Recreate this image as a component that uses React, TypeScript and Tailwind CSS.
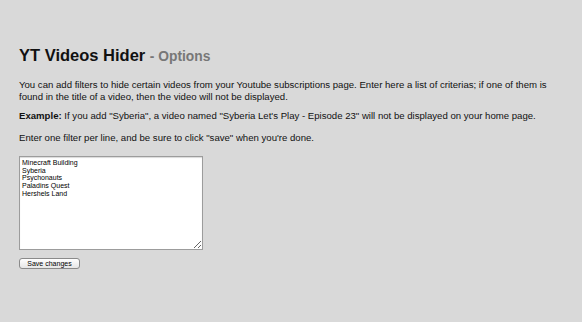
import { useState } from "react";

const DEFAULT_FILTERS = [
  "Minecraft Building",
  "Syberia",
  "Psychonauts",
  "Paladins Quest",
  "Hershels Land",
].join("\n");

export default function App() {
  const [filters, setFilters] = useState(DEFAULT_FILTERS);

  return (
    <main className="min-h-[322px] w-full bg-[#d9d9d9] pl-[19px] pr-[30px] pt-[45px] pb-4 font-['Liberation_Sans',Arial,sans-serif] text-[#111]">
      <h1 className="text-[16.5px] leading-[20px] font-bold">
        YT Videos Hider{" "}
        <span className="text-[13.8px] text-[#777]">- Options</span>
      </h1>
      <div className="mt-[12px] text-[9.6px] leading-[12px]">
        <p>
          You can add filters to hide certain videos from your Youtube
          subscriptions page. Enter here a list of criterias; if one of them is
          found in the title of a video, then the video will not be displayed.
        </p>
        <p className="mt-[7px]">
          <b>Example:</b> If you add "Syberia", a video named "Syberia Let's
          Play - Episode 23" will not be displayed on your home page.
        </p>
        <p className="mt-[10px]">
          Enter one filter per line, and be sure to click "save" when you're done.
        </p>
      </div>
      <div className="mt-[12px] flex flex-col items-start gap-[8px]">
        <textarea
          value={filters}
          onChange={(e) => setFilters(e.target.value)}
          className="block h-[94px] w-[184px] border border-[#9c9c9c] bg-white px-[2px] pt-[2px] text-[7px] leading-[7.7px] text-black shadow-[inset_0_1px_1px_rgba(0,0,0,0.15)] outline-none"
        />
        <button className="h-[11px] w-[61px] rounded-[3px] border border-[#8a8a8a] bg-gradient-to-b from-white to-[#e6e6e6] text-[7px] leading-[9px] text-black">
          Save changes
        </button>
      </div>
    </main>
  );
}
